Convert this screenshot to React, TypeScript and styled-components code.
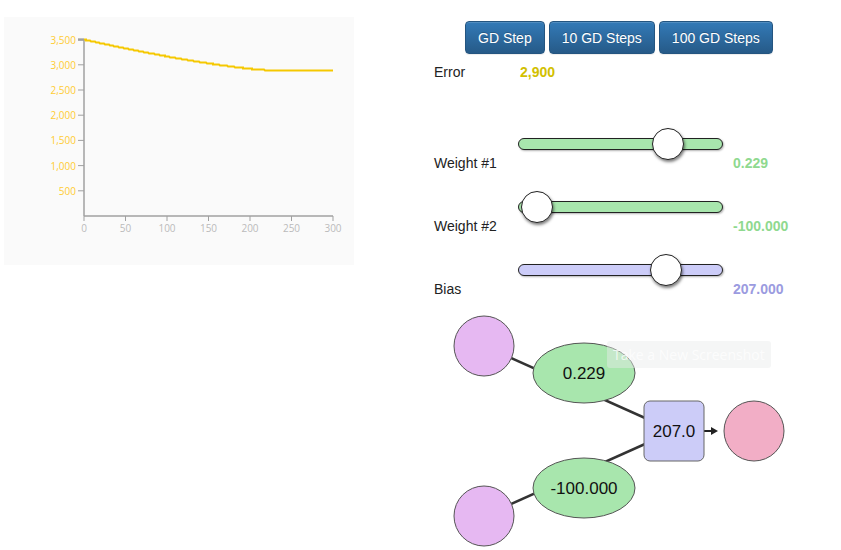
import React from 'react'
import styled, { createGlobalStyle } from 'styled-components'

const GlobalStyle = createGlobalStyle`
  body {
    margin: 0;
    background: #ffffff;
    font-family: "Liberation Sans", Arial, sans-serif;
    color: #222222;
  }
`

// chart geometry, in panel coordinates
const X0 = 80
const Y0 = 199
const X_PER_UNIT = 249 / 300
const Y_PER_UNIT = 25.2 / 500

const sx = (t: number) => X0 + t * X_PER_UNIT
const sy = (v: number) => Y0 - v * Y_PER_UNIT

const errorAt = (t: number) => {
  if (t >= 225) return 2900
  return 2900 + 610 * Math.pow(1 - t / 225, 1.35)
}

const curvePath = () => {
  let d = ''
  for (let t = 0; t <= 300; t++) {
    const x = Math.round(sx(t))
    const y = Math.round(sy(errorAt(t))) + 0.5
    d += (t === 0 ? 'M' : 'L') + x + ',' + y
  }
  return d
}

const yTicks = [3500, 3000, 2500, 2000, 1500, 1000, 500]
const xTicks = [0, 50, 100, 150, 200, 250, 300]

const sliders = [
  { label: 'Weight #1', value: '0.229', fraction: 0.785, fill: '#a8e6ad', tone: '#8fd98f' },
  { label: 'Weight #2', value: '-100.000', fraction: 0.01, fill: '#a8e6ad', tone: '#8fd98f' },
  { label: 'Bias', value: '207.000', fraction: 0.77, fill: '#ccccf8', tone: '#9b9be0' }
]

export default function App () {
  return (
    <>
      <GlobalStyle />
      <Page>
        <LeftCol>
          <ChartPanel>
            <svg width="350" height="248">
              <line x1={X0} y1={sy(3500)} x2={X0} y2={Y0} stroke="#a0a0a0" strokeWidth="1.5" />
              <line x1={X0} y1={Y0} x2={sx(300)} y2={Y0} stroke="#a0a0a0" strokeWidth="1.5" />
              {yTicks.map(v => (
                <g key={v}>
                  <line x1={X0 - 6} x2={X0} y1={sy(v)} y2={sy(v)} stroke="#a0a0a0" strokeWidth={v === 3500 ? 2.5 : 1} />
                  <AxisText x={X0 - 8} y={sy(v)} textAnchor="end" dominantBaseline="central" fill="#ffcc33">
                    {v.toLocaleString('en-US')}
                  </AxisText>
                </g>
              ))}
              {xTicks.map(t => (
                <g key={t}>
                  <line x1={sx(t)} x2={sx(t)} y1={Y0} y2={Y0 + 5} stroke="#a0a0a0" strokeWidth="1" />
                  <AxisText x={sx(t)} y={Y0 + 12} textAnchor="middle" dominantBaseline="central" fill="#bbbbbb">
                    {t}
                  </AxisText>
                </g>
              ))}
              <path d={curvePath()} fill="none" stroke="#f5c800" strokeWidth="2" />
            </svg>
          </ChartPanel>
        </LeftCol>

        <RightCol>
          <ButtonRow>
            <StepButton>GD Step</StepButton>
            <StepButton>10 GD Steps</StepButton>
            <StepButton>100 GD Steps</StepButton>
          </ButtonRow>

          <StatRow>
            <span>Error</span>
            <StatValue $tone="#d2c000">2,900</StatValue>
          </StatRow>

          <SliderList>
            {sliders.map(s => (
              <SliderBlock key={s.label}>
                <Track $fill={s.fill}>
                  <Thumb style={{ left: `${16 + s.fraction * 170}px` }} />
                </Track>
                <LabelRow>
                  <span>{s.label}</span>
                  <StatValue $tone={s.tone}>{s.value}</StatValue>
                </LabelRow>
              </SliderBlock>
            ))}
          </SliderList>

          <Diagram width="360" height="250">
            <line x1="50" y1="46" x2="240" y2="131" stroke="#333" strokeWidth="2.5" />
            <line x1="50" y1="216" x2="240" y2="131" stroke="#333" strokeWidth="2.5" />
            <line x1="270" y1="131" x2="279" y2="131" stroke="#222" strokeWidth="2" />
            <polygon points="277,127 284,131 277,135" fill="#222" />

            <circle cx="50" cy="46" r="30" fill="#e6b8f2" stroke="#555" strokeWidth="1" />
            <circle cx="50" cy="216" r="30" fill="#e6b8f2" stroke="#555" strokeWidth="1" />

            <ellipse cx="150" cy="73" rx="51" ry="30" fill="#a8e6ad" stroke="#555" strokeWidth="1" />
            <NodeText x="150" y="73">0.229</NodeText>

            <ellipse cx="150" cy="188" rx="51" ry="30" fill="#a8e6ad" stroke="#555" strokeWidth="1" />
            <NodeText x="150" y="188">-100.000</NodeText>

            <rect x="210" y="101" width="60" height="60" rx="6" fill="#ccccf8" stroke="#666" strokeWidth="1" />
            <NodeText x="240" y="131">207.0</NodeText>

            <circle cx="320" cy="131" r="30" fill="#f2aec6" stroke="#555" strokeWidth="1" />
          </Diagram>

          <Toast>Take a New Screenshot</Toast>
        </RightCol>
      </Page>
    </>
  )
}

const Page = styled.div`
  display: flex;
  align-items: flex-start;
`

const LeftCol = styled.div`
  width: 430px;
  padding: 17px 0 0 4px;
`

const ChartPanel = styled.div`
  width: 350px;
  height: 248px;
  background: #fafafa;

  svg {
    display: block;
  }
`

const AxisText = styled.text`
  font-family: "Open Sans", "Liberation Sans", sans-serif;
  font-size: 10px;
`

const RightCol = styled.div`
  position: relative;
  width: 407px;
  display: flex;
  flex-direction: column;
  font-size: 14px;
`

const ButtonRow = styled.div`
  display: flex;
  gap: 4px;
  margin: 21px 0 0 31px;
`

const StepButton = styled.button`
  height: 33px;
  padding: 0 12px;
  font-family: "Liberation Sans", Arial, sans-serif;
  font-size: 14px;
  color: #ffffff;
  background: linear-gradient(to bottom, #337ab7 0%, #265a88 100%);
  border: 1px solid #245580;
  border-radius: 4px;
  box-shadow: inset 0 1px 0 rgba(255, 255, 255, 0.15), 0 1px 1px rgba(0, 0, 0, 0.075);
  text-shadow: 0 -1px 0 rgba(0, 0, 0, 0.2);
  cursor: pointer;
`

const StatRow = styled.div`
  display: grid;
  grid-template-columns: 86px auto;
  margin-top: 8px;
  line-height: 20px;
`

const StatValue = styled.span<{ $tone: string }>`
  font-weight: bold;
  color: ${p => p.$tone};
`

const SliderList = styled.div`
  display: flex;
  flex-direction: column;
  gap: 28px;
  margin-top: 56px;
`

const SliderBlock = styled.div`
  display: flex;
  flex-direction: column;
`

const Track = styled.div<{ $fill: string }>`
  position: relative;
  box-sizing: border-box;
  width: 205px;
  height: 12px;
  margin-left: 84px;
  background: ${p => p.$fill};
  border: 1.5px solid #222;
  border-radius: 6px;
  box-shadow: 1px 1px 2px rgba(0, 0, 0, 0.3);
`

const Thumb = styled.div`
  position: absolute;
  top: 50%;
  box-sizing: border-box;
  width: 32px;
  height: 32px;
  transform: translate(-50%, -50%);
  background: #ffffff;
  border: 1.5px solid #222;
  border-radius: 50%;
  box-shadow: 1px 2px 3px rgba(0, 0, 0, 0.5);
`

const LabelRow = styled.div`
  display: grid;
  grid-template-columns: 299px auto;
  margin-top: 3px;
  line-height: 20px;
`

const Diagram = styled.svg`
  display: block;
  margin-top: 1px;
`

const NodeText = styled.text.attrs({ textAnchor: 'middle', dominantBaseline: 'central' })`
  font-family: "Liberation Sans", Arial, sans-serif;
  font-size: 17px;
  fill: #111;
`

const Toast = styled.div`
  position: absolute;
  left: 173px;
  top: 341px;
  height: 27px;
  box-sizing: border-box;
  padding: 0 6px;
  line-height: 27px;
  border-radius: 3px;
  background: rgba(232, 236, 236, 0.45);
  color: rgba(255, 255, 255, 0.75);
  font-family: "Open Sans", "Liberation Sans", sans-serif;
  font-size: 14px;
  white-space: nowrap;
`
